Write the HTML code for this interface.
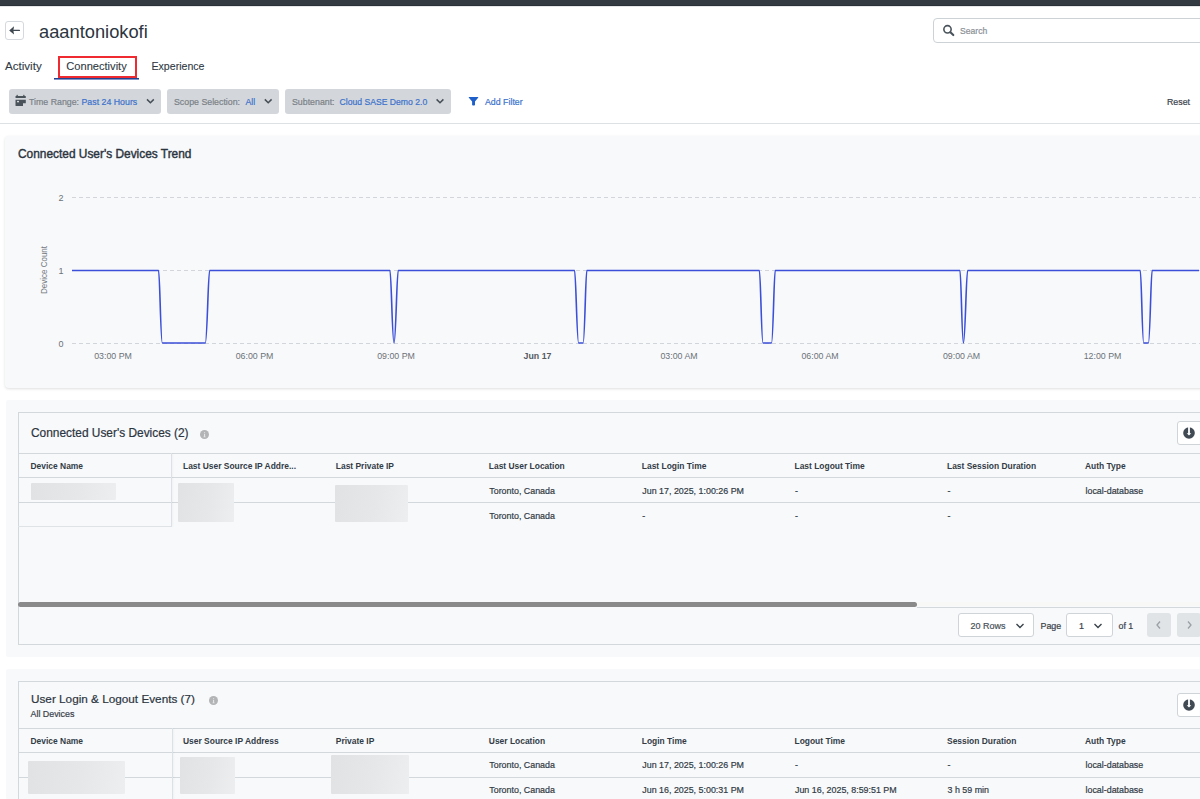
<!DOCTYPE html>
<html><head><meta charset="utf-8">
<style>
*{box-sizing:border-box;margin:0;padding:0}
html,body{width:1200px;height:799px;overflow:hidden;background:#fff;font-family:"Liberation Sans",sans-serif;color:#2f3944}
.a{position:absolute;white-space:nowrap;-webkit-text-stroke:0.2px currentColor}
#topbar{left:0;top:0;width:1200px;height:5px;background:#343a42;position:absolute}
#topbar2{left:0;top:5px;width:1200px;height:1px;background:#2a3037;position:absolute}#topbar3{left:0;top:6px;width:1200px;height:1px;background:#e4e6e8;position:absolute}
.back{left:5px;top:21px;width:19px;height:19px;border:1px solid #d5d9dd;border-radius:3px;background:#fff}
.title{left:39px;top:20.5px;font-size:18.3px;line-height:22px;color:#2b3540;-webkit-text-stroke:0}
.tab{top:59px;font-size:11.3px;line-height:14px;color:#2f3944;-webkit-text-stroke:0.1px currentColor}
.redbox{left:58px;top:56px;width:79px;height:22px;border:2px solid #ef2a31}
.uline{left:54px;top:78px;width:85px;height:2px;background:linear-gradient(#24418f 50%,#7f93c8 50%)}
.search{left:933px;top:18px;width:280px;height:25px;border:1px solid #cdd2d7;border-radius:4px;background:#fff}
.pill{top:89px;height:25px;background:#d3d7db;border-radius:3px}
.pt{top:96.5px;font-size:8.8px;line-height:11px;color:#7b8188}
.pt b{font-weight:400;color:#3c72cc}
.sep{left:0;top:123px;width:1200px;height:1px;background:#dde1e4}
.card{background:#f8f9fb;border-radius:4px}
.ctitle{font-size:11.9px;line-height:14px;color:#2b3540}
.ax{font-size:8.8px;line-height:11px;color:#6c7278}
.inner{border:1px solid #d3d8dd;background:#f8f9fb}
.hline{height:1px;background:#d3d8dd}
.th{font-size:8.45px;line-height:11px;font-weight:700;color:#323c46;-webkit-text-stroke:0}
.td{font-size:8.9px;line-height:11px;color:#323c46}
.blur{background:linear-gradient(100deg,#e0e2e4,#e5e7e9 55%,#eceef0);filter:blur(0.6px);border-radius:1px}
.pbox{background:#fff;border:1px solid #cfd4d9;border-radius:3px}
.dl{width:30px;height:24px;background:#fff;border:1px solid #cfd4d9;border-radius:3px}
</style></head><body>
<div id="topbar"></div><div id="topbar2"></div><div id="topbar3"></div>
<div class="a back"></div>
<svg class="a" style="left:0;top:0;z-index:5" width="1200" height="130" viewBox="0 0 1200 130">
<path d="M9.2,30.4 L14,26.3 L13.4,30.4 L14,34.5 Z" fill="#3f4850"/>
<rect x="13" y="29.7" width="7" height="1.4" rx="0.6" fill="#3f4850"/>
<circle cx="947.5" cy="29.3" r="3.65" stroke="#4a535b" stroke-width="1.6" fill="none"/>
<path d="M950.4,32.2 L953.3,35.1" stroke="#4a535b" stroke-width="2.1" stroke-linecap="round"/>
<g fill="#4a525a"><rect x="15.5" y="95.9" width="10.3" height="2.1" rx="0.5"/><path d="M15.5,99.8 H25.8 V103.2 H23 V106 H16.1 Q15.5,106 15.5,105.4 Z"/><rect x="16.5" y="94.8" width="1.3" height="1.5" rx="0.5"/><rect x="23.2" y="94.8" width="1.3" height="1.5" rx="0.5"/></g>
<rect x="17" y="100.9" width="2" height="1.4" fill="#d3d7db"/>
<g stroke="#464e56" stroke-width="1.5" fill="none" stroke-linejoin="miter"><path d="M147,99.4 L150.4,102.8 L153.8,99.4"/><path d="M264.8,99.4 L268.2,102.8 L271.6,99.4"/><path d="M436.6,99.4 L440,102.8 L443.4,99.4"/></g>
<path d="M468.8,96.9 H478.2 Q478.4,97.3 478.1,97.8 L475,101.6 V105 Q473.6,106.2 472.1,105 V101.6 L468.9,97.8 Q468.6,97.3 468.8,96.9 Z" fill="#1f5fc9"/>
</svg>
<div class="a title">aaantoniokofi</div>
<div class="a tab" style="left:5px;font-size:11.6px">Activity</div>
<div class="a tab" style="left:66.3px;font-size:11.1px">Connectivity</div>
<div class="a tab" style="left:151.5px;font-size:10.6px">Experience</div>
<div class="a uline"></div>
<div class="a redbox"></div>

<div class="a search"></div>
<div class="a" style="left:960px;top:25.8px;font-size:8.6px;line-height:11px;color:#8a9097">Search</div>

<div class="a pill" style="left:9px;width:152px"></div>
<div class="a pt" style="left:29px">Time Range: <b>Past 24 Hours</b></div>
<div class="a pill" style="left:167px;width:112px"></div>
<div class="a pt" style="left:174px">Scope Selection: <b style="margin-left:3px">All</b></div>
<div class="a pill" style="left:285px;width:166px"></div>
<div class="a pt" style="left:292px">Subtenant: <b style="margin-left:2.5px;font-size:8.65px">Cloud SASE Demo 2.0</b></div>
<div class="a pt" style="left:485px;color:#3c72cc">Add Filter</div>
<div class="a pt" style="left:1167px;color:#3a424b">Reset</div>
<div class="a sep"></div>

<!-- chart card -->
<div class="a card" style="left:5px;top:136px;width:1200px;height:252px;box-shadow:0 1px 3px rgba(0,0,0,0.13)"></div>
<div class="a ctitle" style="left:18px;top:147px;-webkit-text-stroke:0.4px currentColor">Connected User's Devices Trend</div>
<svg class="a" style="left:0;top:0" width="1200" height="400" viewBox="0 0 1200 400">
<g stroke="#d2d6da" stroke-width="1" stroke-dasharray="4 3">
<line x1="72" y1="197.5" x2="1200" y2="197.5"/><line x1="72" y1="270.5" x2="1200" y2="270.5"/><line x1="72" y1="343.5" x2="1200" y2="343.5"/>
</g>
<g font-family="Liberation Sans" font-size="9" fill="#6c7278" text-anchor="end">
<text x="63.5" y="200.5">2</text><text x="63.5" y="273.5">1</text><text x="63.5" y="346.5">0</text>
</g>
<g font-family="Liberation Sans" font-size="8.8" fill="#6c7278" text-anchor="middle">
<text x="113" y="358.8">03:00 PM</text><text x="254.5" y="358.8">06:00 PM</text><text x="396" y="358.8">09:00 PM</text>
<text x="537.5" y="358.8" font-weight="700" fill="#555b61">Jun 17</text>
<text x="679" y="358.8">03:00 AM</text><text x="820" y="358.8">06:00 AM</text><text x="961.5" y="358.8">09:00 AM</text><text x="1102.5" y="358.8">12:00 PM</text>
</g>
<text transform="translate(47,270) rotate(-90)" font-family="Liberation Sans" font-size="9.4" fill="#72787e" text-anchor="middle" textLength="48" lengthAdjust="spacingAndGlyphs">Device Count</text>
<path d="M72,270.5 L158.6,270.5 C159.8,270.5 160.6,343.0 162.3,343.0 L205.3,343.0 C207.2,343.0 208.2,270.5 209.6,270.5 L390.0,270.5 C391.3,270.5 392.2,343.0 394.0,343.0 C395.9,343.0 396.8,270.5 398.2,270.5 L574.6,270.5 C575.9,270.5 576.8,343.0 578.6,343.0 L583.1,343.0 C584.8,343.0 585.6,270.5 586.8,270.5 L759.4,270.5 C760.6,270.5 761.4,343.0 763.0,343.0 L771.5,343.0 C773.2,343.0 774.0,270.5 775.2,270.5 L960.0,270.5 C961.1,270.5 961.9,343.0 963.4,343.0 C965.3,343.0 966.2,270.5 967.6,270.5 L1140.3,270.5 C1141.4,270.5 1142.2,343.0 1143.7,343.0 L1148.4,343.0 C1150.1,343.0 1150.9,270.5 1152.1,270.5 L1199,270.5" fill="none" stroke="#3b4fd8" stroke-width="1.6" stroke-linejoin="round"/>
</svg>


<!-- table card 1 -->
<div class="a card" style="left:6px;top:400px;border-radius:2px;width:1200px;height:257px"></div>
<div class="a inner" style="left:18px;top:412px;width:1200px;height:233px"></div>
<div class="a ctitle" style="left:31px;top:426px">Connected User's Devices (2)</div>
<div class="a" style="left:200px;top:429.8px;width:9px;height:9px;border-radius:50%;background:#b2b4b6"></div>
<svg class="a" style="left:200px;top:429.8px" width="9" height="9"><path d="M4,2.2h1.1v1h-1.1z M4,3.9h1.1v2.6h0.5v0.7h-2.1v-0.7h0.5z" fill="#e4e5e6"/></svg>
<div class="a dl" style="left:1177px;top:421px"><svg class="a" style="left:5.2px;top:5px" width="13" height="13" viewBox="0 0 13 13"><circle cx="6" cy="6" r="5.8" fill="#414a53"/><path d="M5.1,0 H6.9 V6.3 H8.3 L6,8.6 L3.7,6.3 H5.1 Z" fill="#fff"/></svg></div>
<div class="a hline" style="left:18px;top:453px;width:1182px"></div>
<div class="a hline" style="left:18px;top:477px;width:1182px"></div>
<div class="a hline" style="left:18px;top:502px;width:1182px"></div>
<div class="a hline" style="left:18px;top:526px;width:154px;background:#e0e3e6"></div>
<div class="a" style="left:171px;top:453px;width:1px;height:74px;background:#dde1e5;box-shadow:1px 0 2px rgba(0,0,0,0.05)"></div>
<div class="a th" style="left:30.5px;top:460.7px">Device Name</div>
<div class="a th" style="left:183.0px;top:460.7px">Last User Source IP Addre...</div>
<div class="a th" style="left:335.8px;top:460.7px">Last Private IP</div>
<div class="a th" style="left:488.8px;top:460.7px">Last User Location</div>
<div class="a th" style="left:641.8px;top:460.7px">Last Login Time</div>
<div class="a th" style="left:794.5px;top:460.7px">Last Logout Time</div>
<div class="a th" style="left:947.0px;top:460.7px">Last Session Duration</div>
<div class="a th" style="left:1085.0px;top:460.7px">Auth Type</div>
<div class="a td" style="left:489.3px;top:485.7px">Toronto, Canada</div>
<div class="a td" style="left:642.3px;top:485.7px">Jun 17, 2025, 1:00:26 PM</div>
<div class="a td" style="left:795.0px;top:485.7px">-</div>
<div class="a td" style="left:947.5px;top:485.7px">-</div>
<div class="a td" style="left:1085.5px;top:485.7px">local-database</div>
<div class="a td" style="left:489.3px;top:511.0px">Toronto, Canada</div>
<div class="a td" style="left:642.3px;top:511.0px">-</div>
<div class="a td" style="left:795.0px;top:511.0px">-</div>
<div class="a td" style="left:947.5px;top:511.0px">-</div>
<div class="a blur" style="left:31px;top:483px;width:85px;height:17px"></div>
<div class="a blur" style="left:178px;top:483px;width:56px;height:39px"></div>
<div class="a blur" style="left:335px;top:485px;width:73px;height:37px"></div>
<div class="a" style="left:917px;top:602px;width:283px;height:4px;background:#f8f8f6"></div><div class="a" style="left:18px;top:602px;width:899px;height:5px;background:#8a8a8a;border-radius:2.5px"></div>
<div class="a hline" style="left:917px;top:606.5px;width:283px"></div>
<div class="a pbox" style="left:958px;top:613px;width:76px;height:24px"></div>
<div class="a td" style="left:970.5px;top:620.5px;font-size:9px;color:#4a525a">20 Rows</div>
<svg class="a" style="left:1014.5px;top:620.7px" width="10" height="10"><path d="M1.5,3 L5,6.5 L8.5,3" stroke="#3a424b" stroke-width="1.4" fill="none"/></svg>
<div class="a td" style="left:1040.5px;top:620.5px;color:#3a424b">Page</div>
<div class="a pbox" style="left:1066px;top:613px;width:47px;height:24px"></div>
<div class="a td" style="left:1079px;top:620.5px;font-size:9px;color:#3a424b">1</div>
<svg class="a" style="left:1093px;top:620.7px" width="10" height="10"><path d="M1.5,3 L5,6.5 L8.5,3" stroke="#3a424b" stroke-width="1.4" fill="none"/></svg>
<div class="a td" style="left:1118.5px;top:620.5px;color:#3a424b">of 1</div>
<div class="a" style="left:1147px;top:613px;width:24px;height:24px;background:#e1e4e7;border-radius:3px"></div>
<svg class="a" style="left:1154px;top:620px" width="10" height="10"><path d="M6,1.5 L3,5 L6,8.5" stroke="#9aa0a6" stroke-width="1.3" fill="none"/></svg>
<div class="a" style="left:1177px;top:613px;width:24px;height:24px;background:#e1e4e7;border-radius:3px"></div>
<svg class="a" style="left:1184px;top:620px" width="10" height="10"><path d="M4,1.5 L7,5 L4,8.5" stroke="#9aa0a6" stroke-width="1.3" fill="none"/></svg>


<!-- table card 2 -->
<div class="a card" style="left:6px;top:669px;border-radius:2px;width:1200px;height:200px"></div>
<div class="a inner" style="left:18px;top:681px;width:1200px;height:200px"></div>
<div class="a ctitle" style="left:31px;top:692px;font-size:11.75px">User Login &amp; Logout Events (7)</div>
<div class="a td" style="left:30.5px;top:709.2px;color:#3a424b">All Devices</div>
<div class="a" style="left:208.5px;top:695.8px;width:9px;height:9px;border-radius:50%;background:#b2b4b6"></div>
<svg class="a" style="left:208.5px;top:695.8px" width="9" height="9"><path d="M4,2.2h1.1v1h-1.1z M4,3.9h1.1v2.6h0.5v0.7h-2.1v-0.7h0.5z" fill="#e4e5e6"/></svg>
<div class="a dl" style="left:1177px;top:693px"><svg class="a" style="left:5.2px;top:5px" width="13" height="13" viewBox="0 0 13 13"><circle cx="6" cy="6" r="5.8" fill="#414a53"/><path d="M5.1,0 H6.9 V6.3 H8.3 L6,8.6 L3.7,6.3 H5.1 Z" fill="#fff"/></svg></div>
<div class="a hline" style="left:18px;top:728px;width:1182px"></div>
<div class="a hline" style="left:18px;top:752px;width:1182px"></div>
<div class="a hline" style="left:18px;top:777px;width:1182px"></div>
<div class="a" style="left:172px;top:728px;width:1px;height:80px;background:#dde1e5;box-shadow:1px 0 2px rgba(0,0,0,0.05)"></div>
<div class="a th" style="left:30.5px;top:735.8px">Device Name</div>
<div class="a th" style="left:183.0px;top:735.8px">User Source IP Address</div>
<div class="a th" style="left:335.8px;top:735.8px">Private IP</div>
<div class="a th" style="left:488.8px;top:735.8px">User Location</div>
<div class="a th" style="left:641.8px;top:735.8px">Login Time</div>
<div class="a th" style="left:794.5px;top:735.8px">Logout Time</div>
<div class="a th" style="left:947.0px;top:735.8px">Session Duration</div>
<div class="a th" style="left:1085.0px;top:735.8px">Auth Type</div>
<div class="a td" style="left:489.3px;top:760.3px">Toronto, Canada</div>
<div class="a td" style="left:642.3px;top:760.3px">Jun 17, 2025, 1:00:26 PM</div>
<div class="a td" style="left:795.0px;top:760.3px">-</div>
<div class="a td" style="left:947.5px;top:760.3px">-</div>
<div class="a td" style="left:1085.5px;top:760.3px">local-database</div>
<div class="a td" style="left:489.3px;top:784.7px">Toronto, Canada</div>
<div class="a td" style="left:642.3px;top:784.7px">Jun 16, 2025, 5:00:31 PM</div>
<div class="a td" style="left:795.0px;top:784.7px">Jun 16, 2025, 8:59:51 PM</div>
<div class="a td" style="left:947.5px;top:784.7px">3 h 59 min</div>
<div class="a td" style="left:1085.5px;top:784.7px">local-database</div>
<div class="a blur" style="left:28px;top:761px;width:97px;height:33px"></div>
<div class="a blur" style="left:180px;top:757px;width:55px;height:37px"></div>
<div class="a blur" style="left:331px;top:755px;width:78px;height:39px"></div>

</body></html>
